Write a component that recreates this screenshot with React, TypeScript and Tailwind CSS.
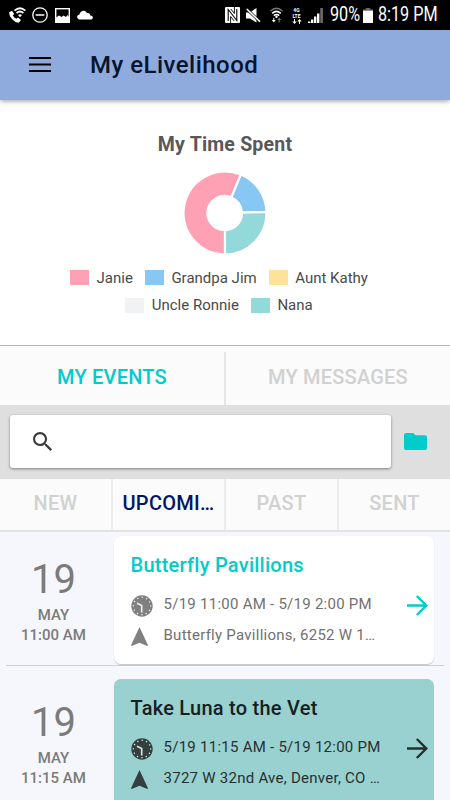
import React from "react";

const legendRows = [
  [
    { name: "Janie", swatch: "bg-[#ffa1b5]" },
    { name: "Grandpa Jim", swatch: "bg-[#86c7f3]" },
    { name: "Aunt Kathy", swatch: "bg-[#ffe29a]" },
  ],
  [
    { name: "Uncle Ronnie", swatch: "bg-[#f1f2f4]" },
    { name: "Nana", swatch: "bg-[#93d9d9]" },
  ],
];

const events = [
  {
    day: "19",
    month: "MAY",
    time: "11:00 AM",
    title: "Butterfly Pavillions",
    range: "5/19 11:00 AM - 5/19 2:00 PM",
    place: "Butterfly Pavillions, 6252 W 1…",
    accepted: false,
  },
  {
    day: "19",
    month: "MAY",
    time: "11:15 AM",
    title: "Take Luna to the Vet",
    range: "5/19 11:15 AM - 5/19 12:00 PM",
    place: "3727 W 32nd Ave, Denver, CO …",
    accepted: true,
  },
];

const StatusBar = () => (
  <div className="flex h-[30px] items-center bg-black pl-[9px] pr-[11px] text-white">
    {/* Wifi call */}
    <svg className="h-4 w-[17px]" viewBox="0 0 17 16" fill="none" stroke="currentColor">
      <path d="M0 5.5 3 3.8 5.2 7 3.8 8.4Q5 10.6 7.4 11.8L9 10.4 12 13 10 15.6Q7 16 3.4 12.4Q0 9 0 5.5Z" fill="currentColor" stroke="none" />
      <path d="M5.5 3.7Q11 -1.2 16.3 3.7M7.5 6Q11 3 14.4 6" strokeWidth="1.7" />
      <path d="M9 8Q11 6.4 13 8L11 10.2Z" fill="currentColor" stroke="none" />
    </svg>
    {/* Do not disturb */}
    <svg className="ml-1.5 h-4 w-4" viewBox="0 0 16 16" fill="none" stroke="currentColor">
      <circle cx="8" cy="8" r="7.2" strokeWidth="1.3" />
      <path d="M3.7 8H12.3" strokeWidth="1.5" />
    </svg>
    {/* Screenshot saved */}
    <svg className="ml-[7px] h-[15px] w-[15px]" viewBox="0 0 15 15" fill="none" stroke="currentColor">
      <rect x=".7" y=".7" width="13.6" height="13.6" strokeWidth="1.4" />
      <path d="M1 14V9.5L4 7.5 6.5 9 8.5 7.5 11 9 12.5 7 14 9V14Z" fill="currentColor" stroke="none" />
    </svg>
    {/* Cloud */}
    <svg className="ml-[7px] h-[10px] w-4" viewBox="0 0 16 10" fill="currentColor">
      <path d="M2.8 9.5C-.8 9.2-.6 5 2.3 4.7 3 1.2 7.7-1.3 10 3.3 12 2.6 13.2 4 13.3 5.5 16.8 5.5 16.5 9.5 14 9.5Z" />
    </svg>
    <div className="grow" />
    {/* NFC */}
    <svg className="h-4 w-[15px]" viewBox="0 0 15 16" fill="none">
      <rect width="15" height="16" rx="1" fill="white" />
      <path d="M3.2 14V2.5L11.8 13.5V2" stroke="black" strokeWidth="1.1" />
      <path d="M5.6 16V9.5L9.2 14M9.4 0V6.5L5.8 2" stroke="black" strokeWidth=".9" />
    </svg>
    {/* Muted */}
    <svg className="ml-1.5 h-[15px] w-[15px]" viewBox="0 0 15 15" fill="currentColor">
      <path d="M0 4.5H4L10.5 0V14.5L4 10.5H0Z" />
      <path d="M.8 1 14 13.8" stroke="black" strokeWidth="2.8" />
      <path d="M.8 1 14 13.8" stroke="currentColor" strokeWidth="1.6" />
    </svg>
    {/* Wifi */}
    <svg className="ml-[9px] h-4 w-[13px]" viewBox="0 0 13 16" fill="none" stroke="currentColor">
      <path d="M.4 4Q6.5-1.6 12.6 4" strokeWidth="1.4" stroke="#777" />
      <path d="M2.2 6.3Q6.5 2.6 10.8 6.3M3.8 8.6Q6.5 6.5 9.2 8.6" strokeWidth="1.6" />
      <circle cx="6.5" cy="9.8" r="1.2" fill="currentColor" stroke="none" />
      <path d="M1.8 13H5.8L3.8 15.5ZM3.3 11H4.3V13H3.3Z" fill="currentColor" stroke="none" />
      <path d="M7.2 13H11.2L9.2 10.5ZM8.7 13H9.7V15.5H8.7Z" fill="#777" stroke="none" />
    </svg>
    {/* 4G LTE */}
    <div className="ml-2 flex w-[11px] flex-col items-center text-[5px] font-bold leading-[6px]">
      <span>4G</span>
      <span>LTE</span>
      <svg className="h-[5px] w-[10px]" viewBox="0 0 10 5" fill="currentColor">
        <path d="M2 0H3V2.5H4.7L2.5 5 .3 2.5H2ZM7 5H8V2.5H9.7L7.5 0 5.3 2.5H7Z" />
      </svg>
    </div>
    {/* Signal */}
    <svg className="ml-[6px] h-[15px] w-[15px]" viewBox="0 0 15 15" fill="currentColor">
      <path d="M0 13.5H2.4V15H0ZM3 11.5H5.4V15H3ZM6 8.5H8.4V15H6ZM9 5.5H11.4V15H9Z" />
      <path d="M12.2 0H15V15H12.2Z" fill="#666" />
    </svg>
    <span className="ml-[7px] w-[29px] origin-left scale-x-[0.83] whitespace-nowrap text-[19.5px] leading-[30px]">90%</span>
    <svg className="ml-[4px] h-[15px] w-[10px]" viewBox="0 0 10 15">
      <path d="M2.7 0H7.3V1.5H2.7ZM0 1.5H10V3H0Z" fill="#666" />
      <path d="M0 2.7H10V15H0Z" fill="white" />
    </svg>
    <span className="ml-[5px] w-[61px] origin-left scale-x-[0.83] whitespace-nowrap text-[19.5px] leading-[30px]">8:19 PM</span>
  </div>
);

const Header = () => (
  <header className="relative z-10 flex h-[70px] items-center bg-[#8fabde] pl-[29px] text-[#07142c] shadow-[0_1px_5px_rgba(0,0,0,0.4)]">
    <svg className="mb-px h-[15px] w-[22px]" viewBox="0 0 22 15" fill="black">
      <path d="M0 0H22V2H0ZM0 6.5H22V8.5H0ZM0 13H22V15H0Z" />
    </svg>
    <h1 className="ml-[39px] text-2xl font-medium tracking-[0.48px]">My eLivelihood</h1>
  </header>
);

const TimeSpent = () => (
  <section className="flex h-[246px] flex-col items-center border-b border-[#b5b5b5] bg-white pt-[32px]">
    <h2 className="text-[19.5px] font-bold leading-[26px] tracking-[0.2px] text-[#58585a]">My Time Spent</h2>
    <svg className="mt-[13px] h-[84px] w-[84px]" viewBox="-42 -42 84 84" stroke="white" strokeWidth="2.2">
      <path d="M0 41.5A41.5 41.5 0 1 1 15.8 -38.4L6.4 -15.5A17 17 0 1 0 0 17Z" fill="#ffa1b5" />
      <path d="M15.8 -38.4A41.5 41.5 0 0 1 41.5 -1L17 -.4A17 17 0 0 0 6.4 -15.5Z" fill="#86c7f3" />
      <path d="M41.5 -1A41.5 41.5 0 0 1 0 41.5L0 17A17 17 0 0 0 17 -.4Z" fill="#93d9d9" />
    </svg>
    <div className="mt-[9px] flex flex-col items-center">
      {legendRows.map((row, i) => (
        <div key={i} className="flex h-[27.5px] items-center gap-[12px] pr-[12px]">
          {row.map((item) => (
            <div key={item.name} className="flex items-center gap-[7.5px]">
              <span className={`h-[15px] w-[19px] ${item.swatch}`} />
              <span className="text-[15px] text-[#4a4a4a]">{item.name}</span>
            </div>
          ))}
        </div>
      ))}
    </div>
  </section>
);

const MainTabs = () => (
  <nav className="flex h-[59px] bg-[#fbfbfb] text-center text-xl font-medium leading-[62px] tracking-[0.2px]">
    <div className="w-[224px] text-[#0cc]">MY EVENTS</div>
    <div className="mt-[6px] w-[2px] bg-[#e6e6e6]" />
    <div className="grow text-[#d1d1d1]">MY MESSAGES</div>
  </nav>
);

const SearchBar = () => (
  <div className="flex h-[74px] items-center bg-[#dfdfdf] pb-[2px] pl-[10px]">
    <div className="flex h-[53px] w-[381px] items-center rounded-[3px] bg-white pl-[23px] shadow-[0_1px_3px_rgba(0,0,0,0.45)]">
      <svg className="h-[19px] w-[19px]" viewBox="3 3 17.5 17.5" fill="#3a3a3a">
        <path d="M15.5 14h-.79l-.28-.27A6.47 6.47 0 0 0 16 9.5 6.5 6.5 0 1 0 9.5 16c1.61 0 3.09-.59 4.23-1.57l.27.28v.79l5 4.99L20.49 19l-4.99-5zm-6 0C7.01 14 5 11.99 5 9.5S7.01 5 9.5 5 14 7.01 14 9.5 11.99 14 9.5 14z" />
      </svg>
    </div>
    <svg className="ml-[13px] h-[17px] w-[23px]" viewBox="2 4 20 16" preserveAspectRatio="none" fill="#0cc">
      <path d="M10 4H4c-1.1 0-2 .9-2 2v12c0 1.1.9 2 2 2h16c1.1 0 2-.9 2-2V8c0-1.1-.9-2-2-2h-8l-2-2z" />
    </svg>
  </div>
);

const FilterTabs = () => (
  <nav className="flex h-[53px] border-b-2 border-[#e3e3e6] bg-[#fbfbfb] text-center text-xl font-medium leading-[49px] tracking-[0.3px] text-[#d1d1d1]">
    <div className="w-[113px] border-r-2 border-[#ececec]">NEW</div>
    <div className="w-[113px] border-r-2 border-[#ececec] text-[#001766]">UPCOMI…</div>
    <div className="w-[113px] border-r-2 border-[#ececec]">PAST</div>
    <div className="grow">SENT</div>
  </nav>
);

const ClockIcon = () => (
  <svg className="h-[22px] w-[22px]" viewBox="0 0 22 22">
    <circle cx="11" cy="11" r="10.7" fill="currentColor" />
    <circle cx="11" cy="11" r="8.7" fill="none" stroke="white" strokeOpacity=".85" strokeWidth="1.5" strokeDasharray=".01 4.545" strokeLinecap="round" />
    <path d="M6 8.2 10.7 10.6V17.5" fill="none" stroke="white" strokeOpacity=".85" strokeWidth="1.6" />
  </svg>
);

const EventRow = ({ event }: { event: (typeof events)[number] }) => {
  const cardColor = event.accepted ? "bg-[#98d1d0] text-[#343f40]" : "bg-white text-[#808080]";
  const titleColor = event.accepted ? "text-[#17201f]" : "text-[#0cc]";
  const detailColor = event.accepted ? "text-[#27302f]" : "text-[#717171]";
  const arrowColor = event.accepted ? "text-[#2c2c2c]" : "text-[#0cc]";

  return (
    <div className="mb-[9px] ml-1.5 mr-[6px] flex h-[134px] border-b border-[#d0d0d3]">
      <div className="flex w-[108px] flex-col items-center pr-[13px] pt-[25px] font-medium text-[#7b7b7b]">
        <span className="text-[40px] font-normal leading-[46px]">{event.day}</span>
        <span className="mt-[2px] text-[15px] leading-[20px]">{event.month}</span>
        <span className="text-[15px] leading-[20px]">{event.time}</span>
      </div>
      <div className={`mt-[4px] flex h-[128px] w-[320px] items-start rounded-[7px] pl-[16.5px] shadow-[0_1px_1px_rgba(0,0,0,0.2)] ${cardColor}`}>
        <div className="w-[291px] pt-[16px]">
          <h3 className={`text-xl font-medium leading-[26px] tracking-[0.25px] ${titleColor}`}>{event.title}</h3>
          <div className="mt-[12px] flex h-[31px] items-center gap-[11px]">
            <ClockIcon />
            <span className={`pb-[3px] text-[15px] tracking-[0.26px] ${detailColor}`}>{event.range}</span>
          </div>
          <div className="flex h-[31px] items-center gap-[16px]">
            <svg className="h-[19px] w-[17px]" viewBox="0 0 17 19" fill="currentColor">
              <path d="M8.5 0 17 18.3 16.3 19 8.5 15.7.7 19 0 18.3Z" />
            </svg>
            <span className={`pb-[3px] text-[15px] tracking-[0.26px] ${detailColor}`}>{event.place}</span>
          </div>
        </div>
        <svg className={`-ml-[15px] mt-[59px] h-[21px] w-[21px] shrink-0 ${arrowColor}`} viewBox="0 0 21 21" fill="none" stroke="currentColor" strokeWidth="2.4">
          <path d="M0 10.5H19.5M9.8 1 19.3 10.5 9.8 20" />
        </svg>
      </div>
    </div>
  );
};

const App = () => {
  return (
    <div className="flex h-[800px] w-[450px] flex-col overflow-hidden bg-[#f6f7fc] font-['Roboto',sans-serif] [&>*]:shrink-0">
      <StatusBar />
      <Header />
      <TimeSpent />
      <MainTabs />
      <SearchBar />
      <FilterTabs />
      <main>
        {events.map((event) => (
          <EventRow key={event.time} event={event} />
        ))}
      </main>
    </div>
  );
};

export default App;
